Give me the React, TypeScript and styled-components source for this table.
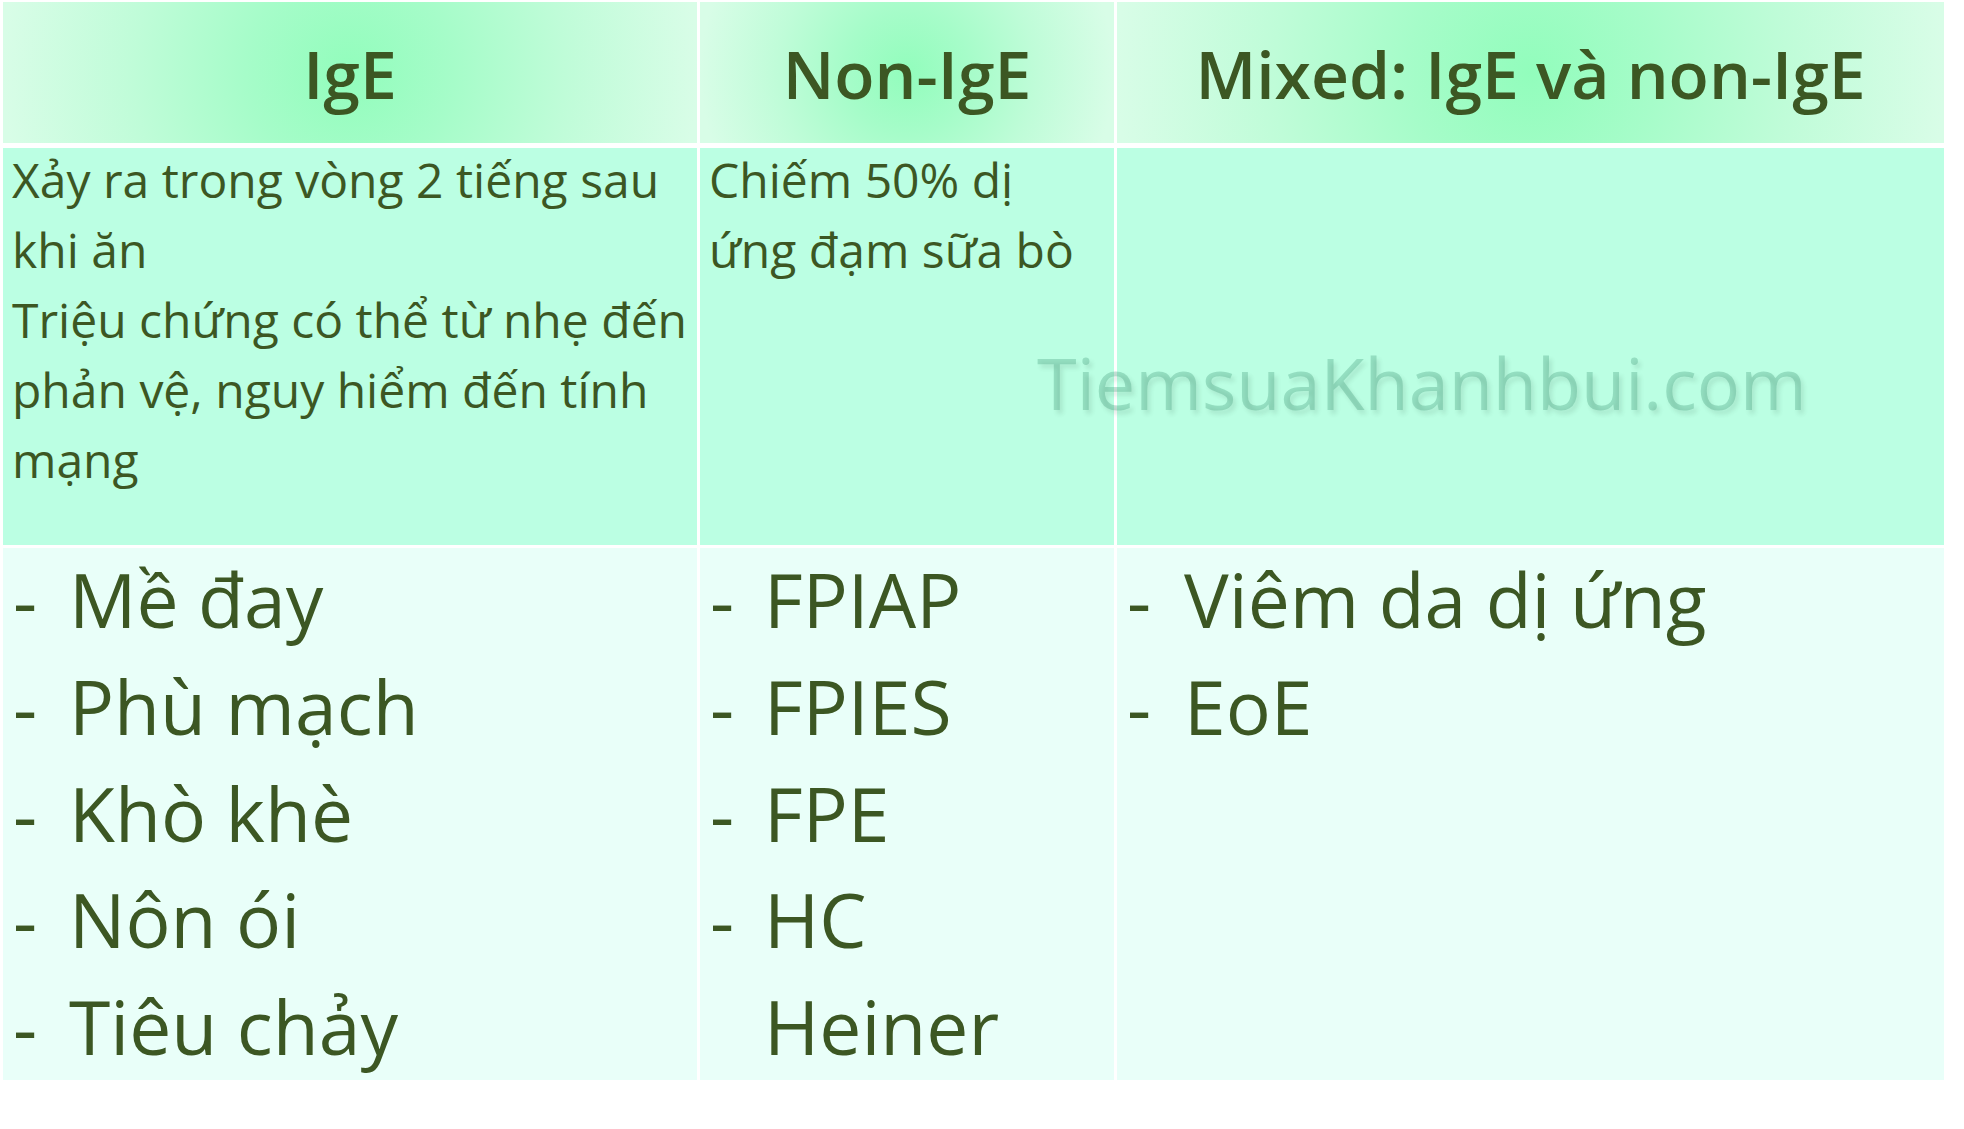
import styled, { createGlobalStyle } from "styled-components";

const GlobalStyle = createGlobalStyle`
  html, body {
    margin: 0;
    padding: 0;
    background: #ffffff;
  }
  body {
    font-family: "Open Sans", "Noto Sans", "DejaVu Sans", sans-serif;
    color: #3c5723;
  }
`;

// column widths of the slide table, taken from the reference
const COLUMNS = "694px 414px 827px";

const Slide = styled.div`
  width: 1964px;
  height: 1129px;
  padding: 2px 0 0 3px;
  box-sizing: border-box;
`;

const Table = styled.div`
  position: relative;
  display: flex;
  flex-direction: column;
  width: 1941px;
`;

const Row = styled.div<{ $height: number; $gap: number }>`
  display: grid;
  grid-template-columns: ${COLUMNS};
  column-gap: 3px;
  height: ${(p) => p.$height}px;
  margin-top: ${(p) => p.$gap}px;
`;

const HeadCell = styled.div`
  display: flex;
  align-items: center;
  justify-content: center;
  background: radial-gradient(
    circle farthest-side at center,
    #92fdbc 0%,
    #a6fcc9 30%,
    #bffcd8 62%,
    #d8fde7 100%
  );
  font-size: 66px;
  font-weight: 600;
  line-height: normal;
  white-space: nowrap;
`;

const NoteCell = styled.div`
  background: #bbffe3;
  padding-left: 9px;
  overflow: hidden;
`;

const Note = styled.p`
  margin: -3px 0 0;
  font-size: 48px;
  line-height: 70px;
  white-space: nowrap;
`;

const ListCell = styled.div`
  background: #e9fff9;
  padding-left: 10px;
`;

const List = styled.ul`
  list-style: none;
  margin: -2px 0 0;
  padding: 0;
  font-size: 75px;
  line-height: 106.8px;
  white-space: nowrap;
`;

const Item = styled.li`
  display: flex;
`;

const Dash = styled.span<{ $w: number }>`
  flex: none;
  width: ${(p) => p.$w}px;
`;

const Watermark = styled.div`
  position: absolute;
  left: 1034px;
  top: 344px;
  font-size: 72px;
  line-height: 72px;
  color: rgba(60, 150, 115, 0.3);
  text-shadow: 3px 4px 4px rgba(40, 70, 60, 0.12);
  pointer-events: none;
  white-space: nowrap;
`;

const columns = [
  {
    head: "IgE",
    note: ["Xảy ra trong vòng 2 tiếng sau", "khi ăn", "Triệu chứng có thể từ nhẹ đến", "phản vệ, nguy hiểm đến tính", "mạng"],
    dash: 56,
    items: [
      { text: "Mề đay", dash: true },
      { text: "Phù mạch", dash: true },
      { text: "Khò khè", dash: true },
      { text: "Nôn ói", dash: true },
      { text: "Tiêu chảy", dash: true },
    ],
  },
  {
    head: "Non-IgE",
    note: ["Chiếm 50% dị", "ứng đạm sữa bò"],
    dash: 54,
    items: [
      { text: "FPIAP", dash: true },
      { text: "FPIES", dash: true },
      { text: "FPE", dash: true },
      { text: "HC", dash: true },
      { text: "Heiner", dash: false },
    ],
  },
  {
    head: "Mixed: IgE và non-IgE",
    note: [],
    dash: 57,
    items: [
      { text: "Viêm da dị ứng", dash: true },
      { text: "EoE", dash: true },
    ],
  },
];

export default function App() {
  return (
    <>
      <GlobalStyle />
      <Slide>
        <Table>
          <Row $height={141} $gap={0}>
            {columns.map((c) => (
              <HeadCell key={c.head}>{c.head}</HeadCell>
            ))}
          </Row>
          <Row $height={397} $gap={5}>
            {columns.map((c) => (
              <NoteCell key={c.head}>
                {c.note.length > 0 && (
                  <Note>
                    {c.note.map((line, i) => (
                      <span key={i}>
                        {i > 0 && <br />}
                        {line}
                      </span>
                    ))}
                  </Note>
                )}
              </NoteCell>
            ))}
          </Row>
          <Row $height={529} $gap={3}>
            {columns.map((c) => (
              <ListCell key={c.head}>
                <List>
                  {c.items.map((it) => (
                    <Item key={it.text}>
                      <Dash $w={c.dash}>{it.dash ? "-" : ""}</Dash>
                      <span>{it.text}</span>
                    </Item>
                  ))}
                </List>
              </ListCell>
            ))}
          </Row>
          <Watermark>TiemsuaKhanhbui.com</Watermark>
        </Table>
      </Slide>
    </>
  );
}
